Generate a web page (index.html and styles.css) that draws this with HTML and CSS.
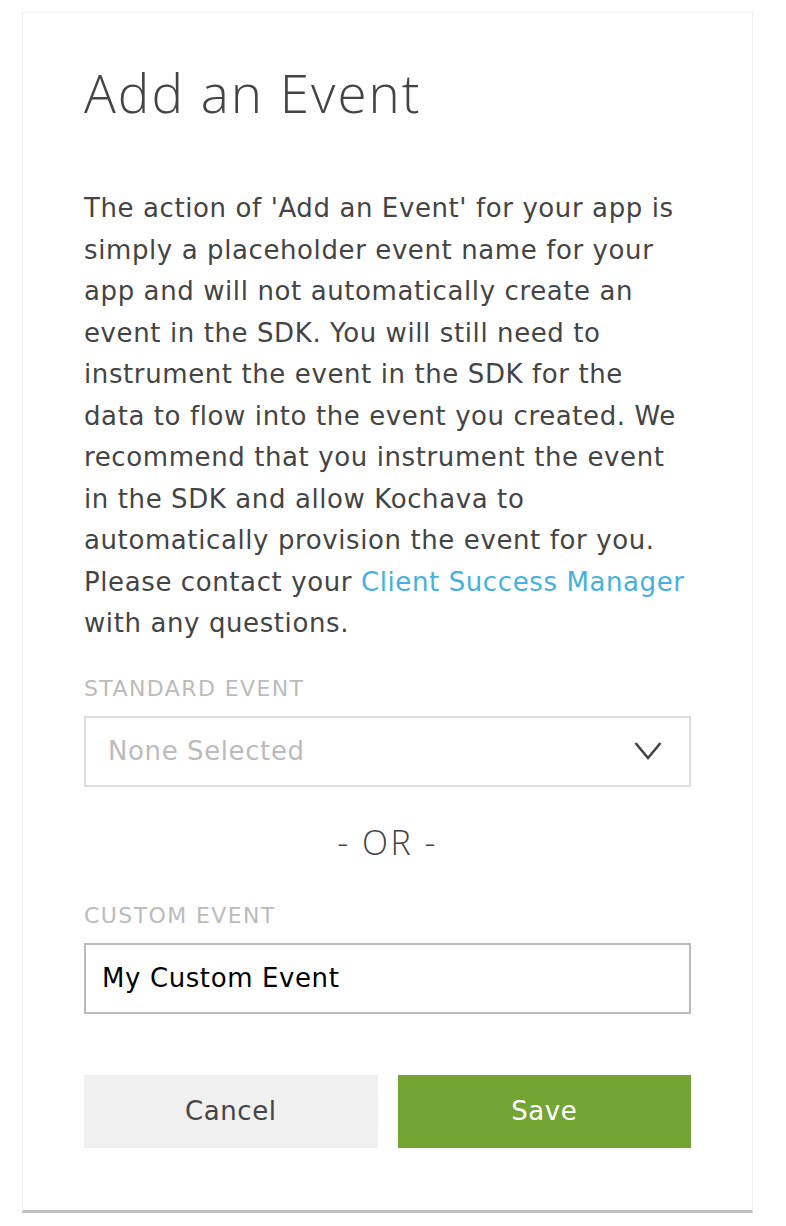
FILE: index.html
```html
<!DOCTYPE html>
<html>
<head>
    <meta charset="UTF-8">
    <title>Add an Event</title>
    <link rel="stylesheet" href="styles.css">
</head>
<body>
    <div class="card">
        <h1 class="title">Add an Event</h1>
        <p class="intro">
            The action of 'Add an Event' for your app is simply a placeholder event name for your
            app and will not automatically create an event in the SDK. You will still need to
            instrument the event in the SDK for the data to flow into the event you created. We
            recommend that you instrument the event in the SDK and allow Kochava to automatically
            provision the event for you. Please contact your
            <a href="#" class="link">Client Success Manager</a> with any questions.
        </p>

        <label class="field-label">Standard Event</label>
        <div class="select-box">
            <span class="placeholder">None Selected</span>
            <svg class="chevron" width="28" height="20" viewBox="0 0 28 20">
                <polyline points="1.5,2 14,17 26.5,2" fill="none" stroke="#444" stroke-width="2.6"/>
            </svg>
        </div>

        <div class="or">- OR -</div>

        <label class="field-label">Custom Event</label>
        <input type="text" class="text-input" value="My Custom Event">

        <div class="actions">
            <button class="btn btn-cancel">Cancel</button>
            <button class="btn btn-save">Save</button>
        </div>
    </div>
</body>
</html>
```

FILE: styles.css
```css
body {
    margin: 0;
    background-color: #fff;
    font-family: "DejaVu Sans", Arial, sans-serif;
    color: #444;
}

.card {
    box-sizing: border-box;
    width: 731px;
    height: 1201px;
    margin: 12px 0 0 22px;
    padding: 48px 61px 0 61px;
    border: 1px solid #eee;
    border-bottom: 3px solid #c0c0c0;
}

.title {
    margin: 0;
    font-family: "Open Sans", Arial, sans-serif;
    font-size: 53px;
    font-weight: 300;
    letter-spacing: 2px;
    line-height: 64px;
    color: #444;
}

.intro {
    margin: 63px 0 0 0;
    font-size: 26px;
    letter-spacing: 0.6px;
    line-height: 41.5px;
}

.link {
    color: #45b1e0;
    text-decoration: none;
}

.field-label {
    display: block;
    margin-top: 31px;
    font-size: 22px;
    letter-spacing: 1.4px;
    text-transform: uppercase;
    color: #bbb;
}

.select-box {
    display: flex;
    align-items: center;
    justify-content: space-between;
    box-sizing: border-box;
    height: 71px;
    margin-top: 15px;
    padding: 0 27px 0 22px;
    border: 2px solid #ddd;
}

.placeholder {
    font-size: 26px;
    letter-spacing: 0.6px;
    color: #bbb;
}

.or {
    margin: 32px 0 38px 0;
    text-align: center;
    font-family: "Open Sans", Arial, sans-serif;
    font-size: 34px;
    font-weight: 300;
    letter-spacing: 2.5px;
}

.text-input {
    display: block;
    box-sizing: border-box;
    width: 100%;
    height: 71px;
    margin-top: 15px;
    padding: 0 16px;
    border: 2px solid #bbb;
    font-family: inherit;
    font-size: 26px;
    letter-spacing: 0.6px;
    color: #000;
    outline: none;
}

.actions {
    display: flex;
    gap: 20px;
    margin-top: 61px;
}

.btn {
    flex: 1;
    height: 73px;
    border: none;
    font-family: inherit;
    font-size: 26px;
    letter-spacing: 0.6px;
    cursor: pointer;
}

.btn-cancel {
    background-color: #f0f0f0;
    color: #444;
}

.btn-save {
    background-color: #72a534;
    color: #fff;
}
```
